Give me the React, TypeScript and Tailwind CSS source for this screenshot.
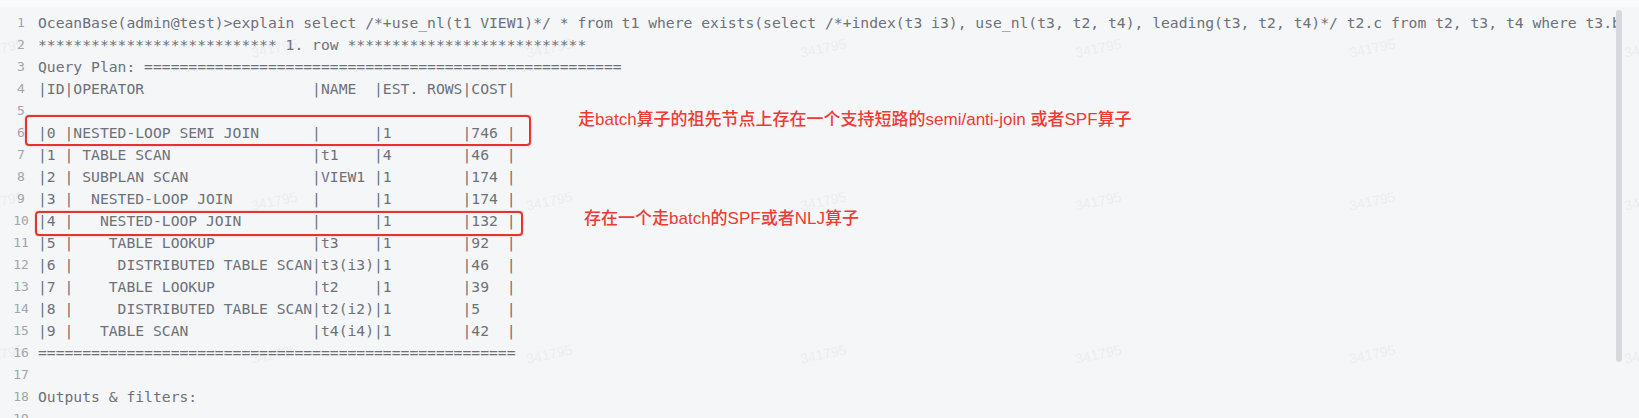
const pad = (s: string, n: number) => s + ' '.repeat(Math.max(0, n - s.length));

const row = (id: string, op: string, name: string, rows: string, cost: string) =>
  `|${pad(id, 2)}|${pad(op, 27)}|${pad(name, 6)}|${pad(rows, 9)}|${pad(cost, 4)}|`;

const lines: string[] = [
  'OceanBase(admin@test)>explain select /*+use_nl(t1 VIEW1)*/ * from t1 where exists(select /*+index(t3 i3), use_nl(t3, t2, t4), leading(t3, t2, t4)*/ t2.c from t2, t3, t4 where t3.b = t2.b and t2.c = t4.c and t1.a = t3.a);',
  '*'.repeat(27) + ' 1. row ' + '*'.repeat(27),
  'Query Plan: ' + '='.repeat(54),
  row('ID', 'OPERATOR', 'NAME', 'EST. ROWS', 'COST'),
  '',
  row('0', 'NESTED-LOOP SEMI JOIN', '', '1', '746'),
  row('1', ' TABLE SCAN', 't1', '4', '46'),
  row('2', ' SUBPLAN SCAN', 'VIEW1', '1', '174'),
  row('3', '  NESTED-LOOP JOIN', '', '1', '174'),
  row('4', '   NESTED-LOOP JOIN', '', '1', '132'),
  row('5', '    TABLE LOOKUP', 't3', '1', '92'),
  row('6', '     DISTRIBUTED TABLE SCAN', 't3(i3)', '1', '46'),
  row('7', '    TABLE LOOKUP', 't2', '1', '39'),
  row('8', '     DISTRIBUTED TABLE SCAN', 't2(i2)', '1', '5'),
  row('9', '   TABLE SCAN', 't4(i4)', '1', '42'),
  '='.repeat(54),
  '',
  'Outputs & filters:',
  '-------------------------------------',
];

const marks = [0, 1, 2].flatMap((r) => [0, 1, 2, 3, 4, 5, 6].map((c) => ({ r, c })));

export default function App() {
  return (
    <div className="relative w-[1639px] h-[418px] overflow-hidden bg-[#f5f6f8]">
      {/* watermark, under the text */}
      <div className="pointer-events-none absolute left-[-137px] top-[-28px] grid grid-cols-[repeat(7,274.5px)] grid-rows-[repeat(3,153px)]">
        {marks.map((m) => (
          <div key={`${m.r}-${m.c}`} className="flex items-center justify-center">
            <span className="-rotate-[12deg] font-['Liberation_Sans',sans-serif] text-[14px] text-[#ecedf0]">341795</span>
          </div>
        ))}
      </div>

      <div className="relative h-[7px] bg-[#f9fafb]" />
      <div className="relative w-[1624px] overflow-hidden pt-[5px] font-['DejaVu_Sans_Mono',monospace] text-[14.7px] leading-[22px] text-[#6d7178]">
        {lines.map((l, i) => (
          <div key={i} className="flex h-[22px] whitespace-pre">
            <span className="ml-[6px] w-[30px] shrink-0 text-center text-[13px] text-[#a1a5ab]">{i + 1}</span>
            <span className="ml-[2px]">{l}</span>
          </div>
        ))}
      </div>

      {/* red highlight boxes */}
      <div className="absolute left-[25px] top-[115px] w-[506px] h-[31px] rounded-[4px] border-2 border-[#e5342c] shadow-[0_0_2px_rgba(229,52,44,0.35)]" />
      <div className="absolute left-[35px] top-[211px] w-[488px] h-[25px] rounded-[4px] border-2 border-[#e5342c] shadow-[0_0_2px_rgba(229,52,44,0.35)]" />

      <div className="absolute left-[578px] top-[107px] font-['Liberation_Sans','Noto_Sans_CJK_SC',sans-serif] text-[17px] leading-[26px] font-medium text-[#ee3a33]">
        走batch算子的祖先节点上存在一个支持短路的semi/anti-join 或者SPF算子
      </div>
      <div className="absolute left-[584px] top-[206px] font-['Liberation_Sans','Noto_Sans_CJK_SC',sans-serif] text-[17px] leading-[26px] font-medium text-[#ee3a33]">
        存在一个走batch的SPF或者NLJ算子
      </div>

      {/* scrollbar */}
      <div className="absolute left-[1616px] top-[10px] w-[6px] h-[352px] rounded-full bg-[#d8d9dc]" />
    </div>
  );
}
